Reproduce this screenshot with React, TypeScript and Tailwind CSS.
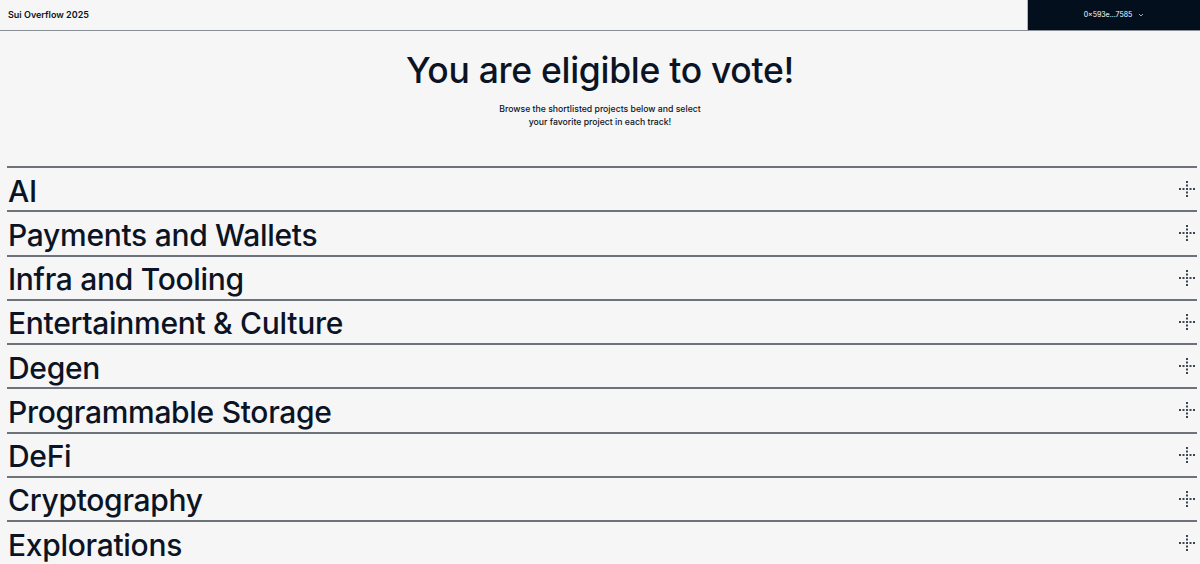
import React from "react";

const tracks = [
  "AI",
  "Payments and Wallets",
  "Infra and Tooling",
  "Entertainment & Culture",
  "Degen",
  "Programmable Storage",
  "DeFi",
  "Cryptography",
  "Explorations",
];

const DotPlus = () => (
  <svg width="18" height="18" viewBox="0 0 18 18" className="fill-[#3b4452]">
    {[1, 4.5, 8, 11.5, 15].map((p) => (
      <rect key={"h" + p} x={p} y={8} width={2} height={2} />
    ))}
    {[1, 4.5, 11.5, 15].map((p) => (
      <rect key={"v" + p} x={8} y={p} width={2} height={2} />
    ))}
  </svg>
);

export default function App() {
  return (
    <div className="min-h-screen bg-[#f6f6f6] text-[#0b1424] font-['Inter',sans-serif]">
      {/* Header */}
      <header className="h-[31px] flex justify-between items-stretch border-b border-[#8a8f96]">
        <div className="px-2 flex items-center text-[9px] font-semibold">Sui Overflow 2025</div>
        <button className="w-[173px] bg-[#030f1c] border-l border-[#b0b4b9] text-white text-[7px] flex items-center justify-center gap-1.5">
          0×593e...7585
          <svg width="6" height="6" viewBox="0 0 6 6" className="stroke-white/80" fill="none">
            <path d="M1 2 L3 4 L5 2" strokeWidth="0.8" />
          </svg>
        </button>
      </header>

      {/* Hero */}
      <section className="flex flex-col items-center pt-[18px] pb-[37px]">
        <h1 className="text-[35.5px] leading-[44px] font-medium tracking-[-0.3px]">You are eligible to vote!</h1>
        <p className="mt-[10px] text-[8.7px] leading-[13px] text-center font-medium">
          Browse the shortlisted projects below and select
          <br />
          your favorite project in each track!
        </p>
      </section>

      {/* Tracks */}
      <div className="pl-[7px] pr-[3px]">
        {tracks.map((t) => (
          <div key={t} className="h-[44.25px] pr-[1px] border-t-2 border-[#6e737a] flex items-center justify-between">
            <span className="pl-[1px] pt-[3px] text-[30px] font-medium tracking-[-0.3px] leading-none">{t}</span>
            <DotPlus />
          </div>
        ))}
      </div>
    </div>
  );
}
